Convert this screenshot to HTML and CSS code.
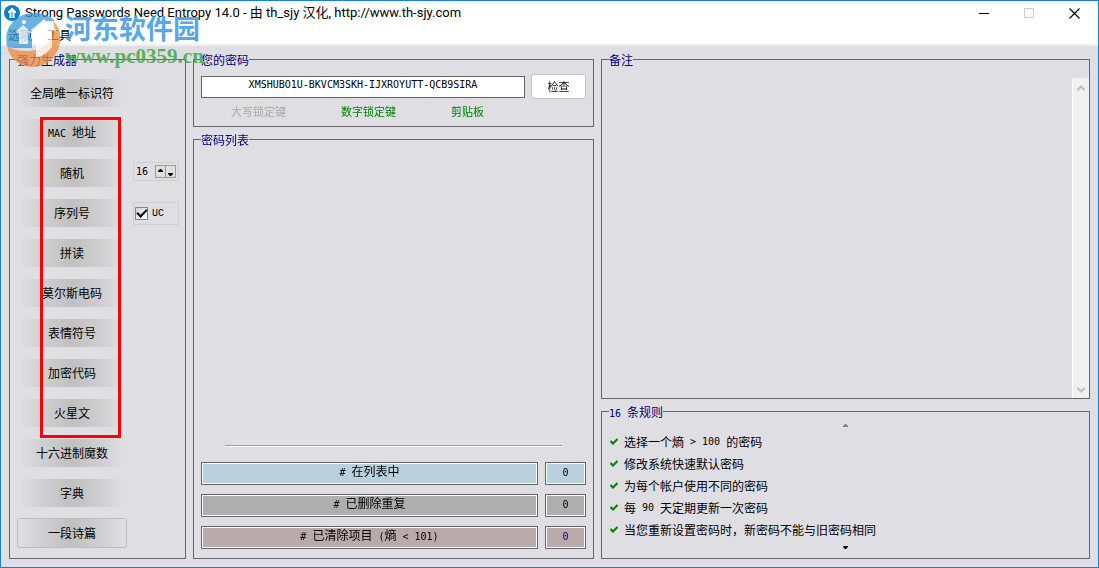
FILE: index.html
```html
<!DOCTYPE html>
<html lang="zh-CN">
<head>
<meta charset="utf-8">
<title>Strong Passwords Need Entropy 14.0</title>
<link rel="stylesheet" href="styles.css">
</head>
<body>
<div class="window">
  <header class="titlebar">
    <svg class="app-icon" viewBox="0 0 16 16" aria-hidden="true"><circle cx="8" cy="8" r="8" fill="#0b7fc4"/><path d="M8 2.500 12 6.500V8H10.500V13H5.500V8H4V6.500Z" fill="#fff"/><path d="M8 7V13" stroke="#0b7fc4" stroke-width="1"/></svg>
    <h1 class="title">Strong Passwords Need Entropy 14.0 - 由 th_sjy 汉化, http://www.th-sjy.com</h1>
    <div class="caption">
      <button class="cap" aria-label="最小化"><svg viewBox="0 0 11 11"><path d="M0 5.500H10" stroke="#000"/></svg></button>
      <button class="cap" aria-label="最大化" disabled><svg viewBox="0 0 11 11"><path d="M.5.500H9.500V9.500H.5Z" stroke="#ccc" fill="none"/></svg></button>
      <button class="cap" aria-label="关闭"><svg viewBox="0 0 11 11"><path d="M.5.500 10.500 10.500M10.500.500.500 10.500" stroke="#000" stroke-width="1.200"/></svg></button>
    </div>
  </header>
  <nav class="menu"><button>选项</button><button>工具</button></nav>
  <main class="body">
    <section class="group generators">
      <h2 class="legend">强力生成器</h2>
      <div class="gen-cols">
        <div class="gen-list">
          <button class="gen">全局唯一标识符</button>
          <button class="gen"><span class="en">MAC </span>地址</button>
          <button class="gen">随机</button>
          <button class="gen">序列号</button>
          <button class="gen">拼读</button>
          <button class="gen">莫尔斯电码</button>
          <button class="gen">表情符号</button>
          <button class="gen">加密代码</button>
          <button class="gen">火星文</button>
          <button class="gen">十六进制魔数</button>
          <button class="gen">字典</button>
          <button class="gen selected">一段诗篇</button>
        </div>
        <div class="gen-options">
          <div class="spin">
            <input class="spin-value en" value="16" aria-label="长度">
            <button class="spin-btn" aria-label="增加"><svg viewBox="0 0 5 3"><path d="M0 3V2L2 0H3L5 2V3Z"/></svg></button><button class="spin-btn down" aria-label="减少"><svg viewBox="0 0 5 3"><path d="M0 0H5V1L3 3H2L0 1Z"/></svg></button>
          </div>
          <label class="uc"><input type="checkbox" class="tick" checked><span class="mono">UC</span></label>
        </div>
      </div>
      <div class="highlight"></div>
    </section>

    <div class="column">
      <section class="group current">
        <h2 class="legend">您的密码</h2>
        <div class="entry">
          <input class="password" value="XMSHUBO1U-BKVCM3SKH-IJXROYUTT-QCB9SIRA" aria-label="您的密码" autofocus>
          <button class="check">检查</button>
        </div>
        <div class="locks"><span class="off">大写锁定键</span><span>数字锁定键</span><span>剪贴板</span></div>
      </section>
      <section class="group passwords">
        <h2 class="legend">密码列表</h2>
        <div class="list-area"></div>
        <div class="counts">
          <div class="count blue"><span class="en"># </span>在列表中</div><div class="count blue"><span class="en">0</span></div>
          <div class="count gray"><span class="en"># </span>已删除重复</div><div class="count gray"><span class="en">0</span></div>
          <div class="count rose"><span class="en"># </span>已清除项目<span class="en"> (</span>熵<span class="en"> &lt; 101)</span></div><div class="count rose navy"><span class="en">0</span></div>
        </div>
      </section>
    </div>

    <div class="column">
      <section class="group notes">
        <h2 class="legend">备注</h2>
        <div class="notes-row">
          <textarea class="memo" aria-label="备注"></textarea>
          <div class="scroll">
            <svg viewBox="0 0 8 6"><path d="M.5 5 4 1.500 7.500 5"/></svg>
            <svg viewBox="0 0 8 6"><path d="M.5 1 4 4.500 7.500 1"/></svg>
          </div>
        </div>
      </section>
      <section class="group rules">
        <h2 class="legend"><span class="en">16 </span>条规则</h2>
        <svg class="arrow faded" viewBox="0 0 5 3"><path d="M0 3V2L2 0H3L5 2V3Z"/></svg>
        <ul>
          <li><svg class="ok" viewBox="0 0 8 8"><path d="M.5 3 3 5.500 7.500 1"/></svg>选择一个熵<span class="en"> &gt; 100 </span>的密码</li>
          <li><svg class="ok" viewBox="0 0 8 8"><path d="M.5 3 3 5.500 7.500 1"/></svg>修改系统快速默认密码</li>
          <li><svg class="ok" viewBox="0 0 8 8"><path d="M.5 3 3 5.500 7.500 1"/></svg>为每个帐户使用不同的密码</li>
          <li><svg class="ok" viewBox="0 0 8 8"><path d="M.5 3 3 5.500 7.500 1"/></svg>每<span class="en"> 90 </span>天定期更新一次密码</li>
          <li><svg class="ok" viewBox="0 0 8 8"><path d="M.5 3 3 5.500 7.500 1"/></svg>当您重新设置密码时，新密码不能与旧密码相同</li>
        </ul>
        <svg class="arrow" viewBox="0 0 5 3"><path d="M0 0H5V1L3 3H2L0 1Z"/></svg>
      </section>
    </div>
  </main>
  <div class="watermark">
    <svg class="wm-logo" viewBox="0 0 56 58" aria-hidden="true">
      <path d="M2 36C-2 16 12 3 30 3C39 3 46 7 50 11L38 11 24 24 27 29V38H10C6 38 3 37 2 36Z" fill="#3d9bd6" opacity=".85"/>
      <path d="M2 36C14 44 34 42 42 34C49 27 51 20 48 11C54 16 56 23 55 32C53 47 41 57 27 57C14 56 4 48 2 36Z" fill="#ee8e42" opacity=".85"/>
      <path d="M10 22 18 15 27 23H23V34H14V23Z" fill="#fff" opacity=".75"/>
      <circle cx="19" cy="12" r="2" fill="#fff"/>
      <path d="M25 21 39 9 52 21H47V37C41 44 36 47 31 47V21Z" fill="#fff" opacity=".8"/>
    </svg>
    <div class="wm-text"><span class="wm-name">河东软件园</span><span class="wm-url">www.pc0359.cn</span></div>
  </div>
</div>
</body>
</html>
```
FILE: styles.css
```css
* { box-sizing: border-box; }
body { margin: 0; font: 12px/16px "Noto Sans CJK SC", sans-serif; color: #000; }
button, input, textarea { font: inherit; color: inherit; margin: 0; padding: 0; border: 0; background: none; border-radius: 0; outline: 0; }
h1, h2, ul { margin: 0; padding: 0; font-weight: 400; list-style: none; }
svg { display: block; }
.en { font-family: "DejaVu Sans Mono", monospace; font-size: 10px; white-space: pre; }
.mono { font-family: "Liberation Mono", monospace; font-size: 10px; }

.window { position: relative; min-height: 100vh; display: flex; flex-direction: column; border: 1px solid #1a80d4; background: #dfdee3; }
.titlebar { display: flex; align-items: center; height: 24px; padding-left: 3px; gap: 5px; background: #fff; }
.app-icon { width: 16px; height: 16px; }
.title { flex: 1; font: 13px/16px Roboto, "Noto Sans CJK SC", sans-serif; white-space: nowrap; }
.caption { display: flex; margin-right: 1px; }
.cap { width: 45px; height: 24px; display: flex; align-items: center; justify-content: center; }
.cap svg { width: 11px; height: 11px; }
.menu { display: flex; gap: 15px; height: 21px; padding: 1px 7px; background: #fff; border-bottom: 2px solid #f0f0f0; }

.body { flex: 1; display: grid; grid-template-columns: 177px 401fr 489fr; gap: 7px; padding: 13px 8px 8px; }
.column { display: flex; flex-direction: column; gap: 12px; min-width: 0; }
.group { position: relative; display: flex; flex-direction: column; border: 1px solid #66666a; padding: 0 7px 9px; }
.legend { align-self: flex-start; margin-top: -8px; height: 16px; font-size: 12px; line-height: 16px; color: #000080; background: #dfdee3; }
.generators { padding-right: 6px; }

.gen-cols { display: flex; gap: 6px; padding-top: 10px; }
.gen-list { flex: none; display: flex; flex-direction: column; gap: 10px; width: 110px; }
.gen { height: 30px; border: 1px solid transparent; border-radius: 3px; background: linear-gradient(90deg, #dfdee3 2%, #d0d0d2 22%, #c0c0c0 50%, #d0d0d2 78%, #dfdee3 98%) content-box; padding: 0; white-space: nowrap; }
.gen.selected { border-color: #bdbdbf; }
.gen-options { flex: none; display: flex; flex-direction: column; gap: 21px; padding-top: 84px; }
.spin { display: flex; align-items: center; width: 46px; height: 19px; border: 1px solid #cfcfd1; padding-left: 2px; }
.spin-value { width: 19px; height: 16px; }
.spin-btn { width: 11px; height: 13px; border: 1px solid #a09a90; display: flex; align-items: center; justify-content: center; padding-bottom: 3px; }
.spin-btn.down { border-left: 0; width: 10px; padding: 5px 0 0; }
.spin-btn svg { width: 5px; height: 3px; flex: none; }
.uc { display: flex; align-items: center; gap: 4px; width: 46px; height: 23px; border: 1px solid #cfcfd1; padding-left: 1px; }
.tick { appearance: none; width: 13px; height: 13px; border: 1px solid #7b8794; background: linear-gradient(135deg, #cbd3dc, #fff); display: grid; place-items: center; }
.tick:checked::before { content: ""; width: 8px; height: 4px; border: solid #000; border-width: 0 0 2px 2px; transform: rotate(-45deg); margin-bottom: 3px; }
.highlight { position: absolute; left: 30px; top: 57px; width: 81px; height: 321px; border: 3px solid #f00; pointer-events: none; }

.current { padding-bottom: 8px; }
.entry { display: flex; gap: 6px; align-items: center; padding-top: 6px; }
.password { flex: 1; min-width: 0; height: 22px; border: 1px solid #66666a; background: #fff; text-align: center; padding-bottom: 4px; font-family: "DejaVu Sans Mono", monospace; font-size: 10px; }
.check { width: 55px; height: 25px; border: 1px solid #c4c4c4; border-radius: 3px; background: #fff; font-size: 11px; padding-bottom: 2px; }
.locks { display: flex; gap: 55px; padding: 4px 0 0 30px; height: 19px; font-size: 11px; color: #008000; }
.locks .off { color: #a8a8a8; }
.passwords { flex: 1; }
.list-area { flex: 1; margin: 0 24px 16px; border-bottom: 1px solid #9d9da0; box-shadow: 0 1px #fff; }
.counts { display: grid; grid-template-columns: 1fr 41px; gap: 9px 7px; }
.count { height: 23px; border: 1px solid #66666a; box-shadow: inset 0 0 0 1px #fff; text-align: center; line-height: 16px; }
.blue { background: #b9d1df; }
.gray { background: #aeaeae; }
.rose { background: #baabaa; }
.navy { color: #000080; }

.notes { flex: 1; padding: 0; }
.notes .legend, .rules .legend { margin-left: 7px; }
.notes-row { flex: 1; display: flex; padding-top: 10px; }
.memo { flex: 1; resize: none; }
.scroll { width: 17px; display: flex; flex-direction: column; justify-content: space-between; align-items: center; padding: 7px 0 5px; background: #f0f0f0; border-left: 1px solid #fff; }
.scroll svg { width: 8px; height: 6px; fill: none; stroke: #bdbdbd; stroke-width: 2; }
.rules { padding: 0 0 6px; }
.rules li { display: flex; align-items: center; height: 22px; padding-left: 8px; white-space: pre; }
.ok { width: 8px; height: 8px; margin-right: 6px; fill: none; stroke: #008000; stroke-width: 2; }
.arrow { width: 5px; height: 3px; align-self: center; margin: 5px 0 3px; }
.faded { margin: 4px 0; fill: #808080; }

.watermark { position: absolute; left: 4px; top: 9px; display: flex; gap: 4px; pointer-events: none; opacity: .9; }
.wm-logo { width: 56px; height: 58px; }
.wm-text { display: flex; flex-direction: column; padding-top: 2px; }
.wm-name { font-size: 27px; line-height: 32px; font-weight: 700; color: #459fe8; }
.wm-url { font: bold 21px/24px "Liberation Serif", serif; color: #4fab52; }
```
